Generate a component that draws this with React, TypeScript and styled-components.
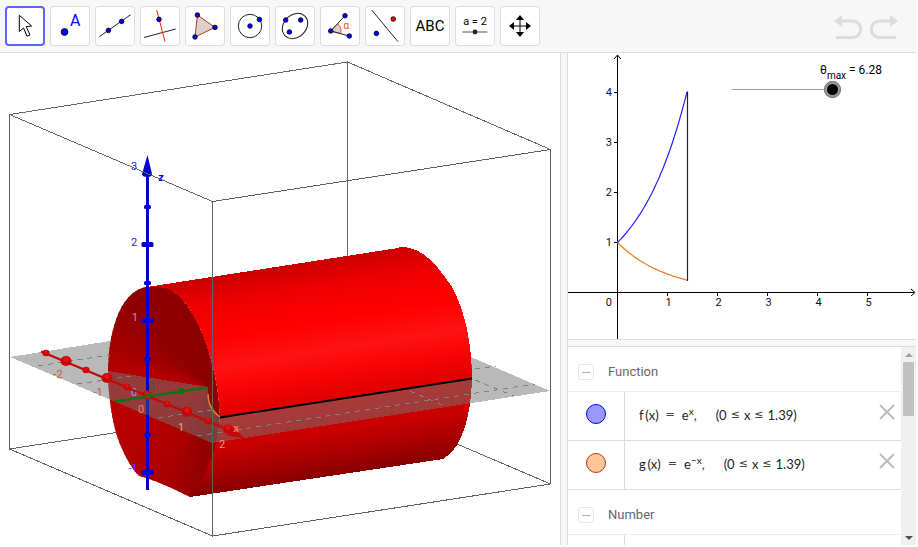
import React, { useState } from "react";
import styled, { createGlobalStyle } from "styled-components";

const GlobalStyle = createGlobalStyle`
  * { box-sizing: border-box; }
  body { margin: 0; background: #fff; font-family: Roboto, "Liberation Sans", sans-serif; }
  button { padding: 0; border: 0; background: none; font: inherit; cursor: pointer; }
  svg { display: block; }
`;

const Page = styled.div`
  display: flex;
  flex-direction: column;
  height: 100vh;
  padding: 0 2px 2px 0;
  overflow: hidden;
`;

const Toolbar = styled.header`
  display: flex;
  align-items: flex-start;
  justify-content: space-between;
  padding: 6px 18px 6px 5px;
  background: #f7f7f7;
  border-bottom: 1px solid #dcdcdc;
`;

const ToolGroup = styled.nav`
  display: flex;
  gap: 5px;
`;

const ToolButton = styled.button<{ $active?: boolean }>`
  width: 40px;
  height: 40px;
  border-radius: 4px;
  background: #fff;
  box-shadow: inset 0 0 0 ${(p) => (p.$active ? "2px #6161ff" : "1px #dcdcdc")};
`;

const HistoryGroup = styled.div`
  display: flex;
  gap: 8px;
  padding-top: 6px;
`;

const Workspace = styled.main`
  flex: 1;
  min-height: 0;
  display: flex;
`;

const SpacePane = styled.section`
  flex: 560 1 0;
  min-width: 0;
  overflow: hidden;
`;

const Divider = styled.div`
  flex: 0 0 8px;
  background: #f7f7f7;
  border: solid #dcdcdc;
  border-width: 0 1px;
`;

const SideColumn = styled.div`
  flex: 348 1 0;
  min-width: 0;
  display: flex;
  flex-direction: column;
`;

const GraphPane = styled.section`
  position: relative;
  flex: 286 1 0;
  min-height: 0;
  overflow: hidden;
`;

const HorizontalDivider = styled.div`
  flex: 0 0 8px;
  background: #f7f7f7;
  border: solid #dcdcdc;
  border-width: 1px 0;
`;

const Drawing = styled.svg`
  width: 100%;
  height: 100%;
`;

const SliderBox = styled.div`
  position: absolute;
  top: 7px;
  right: 34px;
  display: flex;
  flex-direction: column;
  align-items: flex-end;
  gap: 1px;
`;

const SliderLabel = styled.label`
  font-size: 12px;
  line-height: 20px;
  color: #000;
  sub {
    font-size: 10px;
    line-height: 0;
    vertical-align: -5px;
  }
`;

const Range = styled.input`
  appearance: none;
  width: 109px;
  height: 17px;
  margin: 0 41px 0 0;
  background: linear-gradient(#999, #999) 0 8px / 100px 1px no-repeat;
  &::-webkit-slider-thumb {
    appearance: none;
    width: 17px;
    height: 17px;
    border: 3px solid #999;
    border-radius: 50%;
    background: #000;
    outline: 1px solid #777;
    outline-offset: -1px;
  }
`;

const AlgebraPane = styled.section`
  flex: 198 1 0;
  min-height: 0;
  display: flex;
  overflow: hidden;
`;

const AlgebraList = styled.div`
  flex: 1;
  min-width: 0;
  overflow: hidden;
`;

const GroupHeader = styled.div`
  display: flex;
  align-items: center;
  gap: 14px;
  height: 45px;
  padding: 6px 0 0 10px;
  border-bottom: 1px solid #eee;
`;

const GroupTitle = styled.h2`
  margin: 0;
  font-size: 13px;
  line-height: 16px;
  font-weight: 400;
  color: #666;
`;

const CollapseButton = styled.button`
  display: grid;
  place-items: center;
  width: 16px;
  height: 16px;
  border: 1px solid #e6e6e6;
  border-radius: 3px;
  &::after {
    content: "";
    width: 8px;
    height: 1px;
    background: #aaa;
  }
`;

const AlgebraRow = styled.div`
  display: flex;
  height: 49px;
  border-bottom: 1px solid #dcdcdc;
`;

const MarbleCell = styled.div`
  display: grid;
  place-items: center;
  flex: 0 0 57px;
  padding-bottom: 4px;
  border-right: 1px solid #dcdcdc;
`;

const Marble = styled.button<{ $fill: string; $edge: string }>`
  width: 20px;
  height: 20px;
  border: 1px solid ${(p) => p.$edge};
  border-radius: 50%;
  background: ${(p) => p.$fill};
`;

const Formula = styled.div`
  display: flex;
  align-items: center;
  gap: 7px;
  flex: 1;
  padding: 0 0 2px 14px;
  font-family: Lato, sans-serif;
  font-size: 13px;
  line-height: 20px;
  color: #222;
  white-space: nowrap;
  sup {
    font-size: 10px;
    line-height: 0;
    vertical-align: 5px;
  }
`;

const Domain = styled.span`
  display: flex;
  gap: 4px;
  padding-left: 12px;
`;

const Relation = styled.span`
  font-family: "DejaVu Sans", sans-serif;
  font-size: 11px;
  color: #444;
`;

const DeleteButton = styled.button`
  align-self: center;
  margin: 0 6px 8px 0;
`;

const ScrollTrack = styled.div`
  display: flex;
  flex-direction: column;
  align-items: center;
  flex: 0 0 15px;
  background: #f0f0f0;
`;

const ScrollButton = styled.button`
  display: grid;
  place-items: center;
  width: 15px;
  height: 15px;
`;

const ScrollThumb = styled.div`
  width: 11px;
  height: 54px;
  background: #c1c1c1;
`;

const ScrollSpace = styled.div`
  flex: 1;
`;

const Dot = ({ x, y, r = 2.5, c = "#00f" }: { x: number; y: number; r?: number; c?: string }) => (
  <circle cx={x} cy={y} r={r - 0.2} fill={c} stroke="#000" strokeWidth="0.8" />
);

const tools: { name: string; icon: React.ReactNode }[] = [
  {
    name: "Move",
    icon: <path d="M14.3 9.3V25.5L18.6 22L22 30.2L25 29L21.3 20.7L26.6 20Z" fill="#fff" stroke="#000" strokeWidth="1" />,
  },
  {
    name: "Point",
    icon: (
      <>
        <Dot x={14.5} y={26} r={3.6} />
        <text x="20" y="20" fontSize="16" fill="#00f">A</text>
      </>
    ),
  },
  {
    name: "Line",
    icon: (
      <>
        <path d="M4.3 30.7L35.7 8.7" stroke="#222" />
        <Dot x={13.4} y={24.4} />
        <Dot x={26.6} y={15.4} />
      </>
    ),
  },
  {
    name: "Perpendicular line",
    icon: (
      <>
        <path d="M4 31.5L35.7 23" stroke="#222" />
        <path d="M16.7 4L25 35.7" stroke="#f42c00" />
        <Dot x={19} y={13.4} />
      </>
    ),
  },
  {
    name: "Polygon",
    icon: (
      <>
        <path d="M12.4 9L30 21.4L10 31Z" fill="#ddd0cc" stroke="#a63a1e" />
        <Dot x={12.4} y={9} />
        <Dot x={30} y={21.4} />
        <Dot x={10} y={31} />
      </>
    ),
  },
  {
    name: "Circle",
    icon: (
      <>
        <circle cx="20" cy="20" r="11.7" fill="none" stroke="#222" />
        <Dot x={20} y={20} />
        <Dot x={29.4} y={13.4} />
      </>
    ),
  },
  {
    name: "Ellipse",
    icon: (
      <>
        <ellipse cx="20" cy="20" rx="14" ry="11.2" transform="rotate(-45 20 20)" fill="none" stroke="#222" />
        <Dot x={10.7} y={14} />
        <Dot x={25.7} y={14} />
        <Dot x={14.4} y={26} />
      </>
    ),
  },
  {
    name: "Angle",
    icon: (
      <>
        <path d="M10.7 25L17.8 17.5A10.5 10.5 0 0 1 20.9 27.6Z" fill="#ddd0cc" stroke="#f0604a" />
        <path d="M25 9.7L10.7 25L29.3 30" fill="none" stroke="#222" />
        <text x="23.5" y="23" fontSize="10" fill="#f4422a">α</text>
        <Dot x={25} y={9.7} />
        <Dot x={10.7} y={25} />
        <Dot x={29.3} y={30} />
      </>
    ),
  },
  {
    name: "Reflect",
    icon: (
      <>
        <path d="M6.7 4L33 35.7" stroke="#222" />
        <Dot x={28.3} y={13} c="#f00" />
        <Dot x={11.4} y={27.4} />
      </>
    ),
  },
  {
    name: "Text",
    icon: <text x="20" y="25" fontSize="15" textAnchor="middle" fill="#000">ABC</text>,
  },
  {
    name: "Slider",
    icon: (
      <>
        <text x="20" y="19" fontSize="11" textAnchor="middle" fill="#000">a = 2</text>
        <path d="M7.5 26H32.5" stroke="#555" />
        <circle cx="20" cy="26" r="2.4" fill="#223" />
      </>
    ),
  },
  {
    name: "Move view",
    icon: (
      <>
        <path d="M11 20H29M20 11V29" stroke="#000" />
        <path d="M9 20L14 16V24ZM31 20L26 16V24ZM20 9L16 14H24ZM20 31L16 26H24Z" fill="#000" />
      </>
    ),
  },
];

/* ---- 3D scene ---- */

const apex = { x: 208, y: 387 };
const shadeStops: [number, number][] = [
  [0, 0x8c], [60, 0x8e], [96, 0x94], [104, 0xa0], [120, 0xae], [150, 0xb6],
  [175, 0xbc], [192, 0xb2], [212, 0x9a], [228, 0x8f], [270, 0x8c], [360, 0x8c],
];

function shade(angle: number) {
  const i = Math.max(1, shadeStops.findIndex(([a]) => a >= angle));
  const [a0, v0] = shadeStops[i - 1];
  const [a1, v1] = shadeStops[i];
  return Math.round(v0 + ((v1 - v0) * (angle - a0)) / (a1 - a0));
}

const fan = Array.from({ length: 120 }, (_, i) => {
  const at = (deg: number) => {
    const t = (deg * Math.PI) / 180;
    return `${(apex.x + 300 * Math.cos(t)).toFixed(1)} ${(apex.y + 300 * Math.sin(t)).toFixed(1)}`;
  };
  const start = i * 3;
  return { d: `M${apex.x} ${apex.y}L${at(start)}L${at(start + 4)}Z`, fill: `rgb(${shade(start)},0,0)` };
});

const facePath =
  "M147 287C136 288 126 297 119 312C112 328 108 349 108 371C108 392 111 414 116 433C121 449 130 467 139 476C155 480 172 488 190 497L200 494C212 470 218 440 220 417C219 385 211 355 203 335C194 312 178 287 160 287Z";
const sidePath =
  "M147 287L398 248Q402 246 409 248C424 250 438 266 452 287C465 310 472 345 472 379C471 414 463 448 443 459L190 497C209 474 218 445 220 417C219 385 211 355 203 335C194 312 178 287 160 287Z";

const redNodes: [number, number, number][] = [
  [46, 353, 3.6], [66, 361, 5.6], [86, 370, 3.6], [107, 378, 5.6], [127, 387, 3.6],
  [147, 395, 5], [167, 404, 3.6], [187, 412, 5.6], [208, 421, 3.6], [228, 429, 5],
];
const blueTicks: [number, number, number][] = [
  [207, 3.5, 4], [244.5, 6, 5], [283, 3.5, 4], [320.5, 6, 5], [359, 3.5, 4], [397, 5, 3], [435, 3.5, 4], [472.5, 6, 5],
];
const sceneLabels: [string, number, number, string][] = [
  ["3", 134, 170, "#2222f0"], ["2", 134, 246, "#2222f0"], ["1", 135, 321, "#9494ff"],
  ["0", 134, 396, "#9494ff"], ["-1", 133, 472, "#4444ff"], ["-2", 58, 378, "#c06040"],
  ["-1", 98, 396, "#c06040"], ["0", 141, 413, "#e08874"], ["1", 181, 431, "#eca08c"],
  ["2", 222, 448, "#f09c88"], ["0", 151, 390, "#157015"], ["z", 161, 181, "#0000f0"],
];

const Scene = () => (
  <Drawing viewBox="0 53 560 492" preserveAspectRatio="xMinYMin meet" role="img" aria-label="3D view of the solid of revolution">
    <defs>
      <linearGradient id="side" gradientUnits="userSpaceOnUse" x1="300" y1="264" x2="333" y2="475">
        <stop offset="0" stopColor="#cc0000" />
        <stop offset="0.12" stopColor="#ee0000" />
        <stop offset="0.28" stopColor="#ff0000" />
        <stop offset="0.42" stopColor="#ff1212" />
        <stop offset="0.52" stopColor="#fa0404" />
        <stop offset="0.64" stopColor="#e00000" />
        <stop offset="0.8" stopColor="#c80000" />
        <stop offset="0.92" stopColor="#a40000" />
        <stop offset="1" stopColor="#880000" />
      </linearGradient>
      <clipPath id="face">
        <path d={facePath} />
      </clipPath>
    </defs>
    <g fill="none" stroke="#666" strokeWidth="1" shapeRendering="crispEdges">
      <path d="M9.5 114.5L347.5 62L550.5 149.5M347.5 62V260M9.5 449L120 432M450 441L550.5 484" />
    </g>
    <g shapeRendering="crispEdges">
      <g clipPath="url(#face)">
        {fan.map((f) => (
          <path key={f.d} d={f.d} fill={f.fill} />
        ))}
      </g>
      <path d={sidePath} fill="url(#side)" />
      <path d="M10 357L110 341L108 371L208 387L209 402L220 417L472 379L471 357L550 391L212 443Z" fill="#747474" fillOpacity="0.5" />
    </g>
    <g fill="none" stroke="#808080" strokeDasharray="5 5" shapeRendering="crispEdges">
      <path d="M38 366L110 355M77 384L132 376M158 418L212 410M197 436L535 384M475 369L496 366M475 380L514 396M410 391L447 407" />
    </g>
    <path d="M220 417.5L472 378.5" stroke="#000" strokeWidth="1.8" />
    <path d="M208 394Q208 409 220 417" fill="none" stroke="#f08020" strokeWidth="1.3" />
    <g fontSize="11" textAnchor="middle">
      {sceneLabels.map(([text, x, y, fill], i) => (
        <text key={i} x={x} y={y} fill={fill} fontWeight={text === "z" ? 700 : 400}>{text}</text>
      ))}
    </g>
    <g fill="#0000d0">
      <path d="M146 172H149V397H146ZM146 415H149V490H146Z" />
      <path d="M146 397H149V415H146Z" fill="#28289c" />
      <path d="M147.5 155L152 174Q152 177 147.5 177Q142 177 142 174Z" />
      {blueTicks.map(([y, w, h]) => (
        <rect key={y} x={147.5 - w} y={y - h / 2} width={w * 2} height={h} rx="1.5" />
      ))}
    </g>
    <g fill="#c80808" stroke="#c40808">
      <path d="M41 351.5L236 433" strokeWidth="2.4" />
      <path d="M231 427L244 438L228 435Z" />
      {redNodes.map(([x, y, r]) => (
        <ellipse key={x} cx={x} cy={y} rx={r} ry={r * 0.9} stroke="none" />
      ))}
      {redNodes.map(([x, y, r]) => (
        <circle key={x} cx={x} cy={y - r * 0.3} r={r * 0.45} fill="#e01414" stroke="none" />
      ))}
    </g>
    <text x="236" y="432" fontSize="11" fontWeight="700" textAnchor="middle" fill="#ff6858">x</text>
    <path d="M115 401.5L207 387.5" stroke="#147014" strokeWidth="2.4" />
    <rect x="178" y="388" width="6" height="6" rx="1" fill="#147014" />
    <rect x="146" y="393" width="5" height="5" rx="1" fill="#147014" />
    <g fill="none" stroke="#606060" shapeRendering="crispEdges">
      <path d="M9.5 114.5V449L212.5 536L550.5 484V149.5L212.5 201.5L9.5 114.5M212.5 201.5V536" />
    </g>
  </Drawing>
);

/* ---- 2D graph ---- */

const unit = 50;
const origin = { x: 49.5, y: 239.5 };
const plot = (fn: (x: number) => number) =>
  Array.from({ length: 41 }, (_, i) => {
    const x = (1.39 * i) / 40;
    return `${i ? "L" : "M"}${(origin.x + x * unit).toFixed(1)} ${(origin.y - fn(x) * unit).toFixed(1)}`;
  }).join("");

const Graph = () => (
  <Drawing viewBox="0 0 348 286" preserveAspectRatio="xMinYMin meet" role="img" aria-label="Graph of f and g">
    <g fill="none" stroke="#000">
      <path d="M49.5 286V3M46 6L49.5 2L53 6M0 239.5H346M343 236L347 239.5L343 243" />
      {[1, 2, 3, 4, 5].map((n) => (
        <path key={n} d={`M${origin.x + n * unit} 240V243`} />
      ))}
      {[1, 2, 3, 4].map((n) => (
        <path key={n} d={`M46 ${origin.y - n * unit}H49`} />
      ))}
    </g>
    <path d={plot((x) => Math.exp(x))} fill="none" stroke="#2222ff" strokeWidth="1.2" />
    <path d={plot((x) => Math.exp(-x))} fill="none" stroke="#f47c20" strokeWidth="1.3" />
    <path d="M119.5 38.5V228" stroke="#222" strokeWidth="1.2" />
    <g fontSize="11" fill="#111">
      {[1, 2, 3, 4, 5].map((n) => (
        <text key={n} x={origin.x + n * unit + 1} y="253" textAnchor="middle">{n}</text>
      ))}
      {[1, 2, 3, 4].map((n) => (
        <text key={n} x="44" y={origin.y - n * unit + 3} textAnchor="end">{n}</text>
      ))}
      <text x="44" y="253" textAnchor="end">0</text>
    </g>
  </Drawing>
);

const FunctionRow = ({ name, exponent, fill, edge }: { name: string; exponent: string; fill: string; edge: string }) => (
  <AlgebraRow>
    <MarbleCell>
      <Marble $fill={fill} $edge={edge} aria-label={`Show or hide ${name}`} />
    </MarbleCell>
    <Formula>
      <span>{name}&#8201;(x)</span>
      <Relation>=</Relation>
      <span>e<sup>{exponent}</sup>,</span>
      <Domain>
        <span>(0</span>
        <Relation>≤</Relation>
        <span>x</span>
        <Relation>≤</Relation>
        <span>1.39)</span>
      </Domain>
    </Formula>
    <DeleteButton aria-label={`Delete ${name}`}>
      <svg width="16" height="16" viewBox="0 0 16 16">
        <path d="M1 1L15 15M15 1L1 15" stroke="#bbb" strokeWidth="1.9" />
      </svg>
    </DeleteButton>
  </AlgebraRow>
);

export default function App() {
  const [active, setActive] = useState("Move");
  const [theta, setTheta] = useState(6.28);
  return (
    <Page>
      <GlobalStyle />
      <Toolbar>
        <ToolGroup>
          {tools.map((t) => (
            <ToolButton key={t.name} aria-label={t.name} $active={t.name === active} onClick={() => setActive(t.name)}>
              <svg width="40" height="40" viewBox="0 0 40 40">{t.icon}</svg>
            </ToolButton>
          ))}
        </ToolGroup>
        <HistoryGroup>
          <button aria-label="Undo">
            <svg width="28" height="30" viewBox="0 0 28 30">
              <path d="M7 9H18.5A8.2 8.2 0 0 1 18.5 25.5H2" fill="none" stroke="#dcdcdc" strokeWidth="3" />
              <path d="M0 9L8 3V15Z" fill="#dcdcdc" />
            </svg>
          </button>
          <button aria-label="Redo">
            <svg width="28" height="30" viewBox="0 0 28 30">
              <path d="M21 9H9.5A8.2 8.2 0 0 0 9.5 25.5H26" fill="none" stroke="#dcdcdc" strokeWidth="3" />
              <path d="M28 9L20 3V15Z" fill="#dcdcdc" />
            </svg>
          </button>
        </HistoryGroup>
      </Toolbar>
      <Workspace>
        <SpacePane>
          <Scene />
        </SpacePane>
        <Divider />
        <SideColumn>
          <GraphPane>
            <Graph />
            <SliderBox>
              <SliderLabel htmlFor="theta">
                θ<sub>max</sub> = {theta.toFixed(2)}
              </SliderLabel>
              <Range
                id="theta"
                type="range"
                min={0}
                max={6.28}
                step={0.01}
                value={theta}
                onChange={(e) => setTheta(Number(e.target.value))}
              />
            </SliderBox>
          </GraphPane>
          <HorizontalDivider />
          <AlgebraPane>
            <AlgebraList>
              <GroupHeader>
                <CollapseButton aria-label="Collapse Function" />
                <GroupTitle>Function</GroupTitle>
              </GroupHeader>
              <FunctionRow name="f" exponent="x" fill="#9999ff" edge="#0000f0" />
              <FunctionRow name="g" exponent="−x" fill="#ffc799" edge="#b83a1c" />
              <GroupHeader>
                <CollapseButton aria-label="Collapse Number" />
                <GroupTitle>Number</GroupTitle>
              </GroupHeader>
              <AlgebraRow>
                <MarbleCell />
              </AlgebraRow>
            </AlgebraList>
            <ScrollTrack>
              <ScrollButton aria-label="Scroll up">
                <svg width="8" height="4" viewBox="0 0 8 4"><path d="M4 0L8 4H0Z" fill="#a0a0a0" /></svg>
              </ScrollButton>
              <ScrollThumb />
              <ScrollSpace />
              <ScrollButton aria-label="Scroll down">
                <svg width="8" height="4" viewBox="0 0 8 4"><path d="M0 0H8L4 4Z" fill="#505050" /></svg>
              </ScrollButton>
            </ScrollTrack>
          </AlgebraPane>
        </SideColumn>
      </Workspace>
    </Page>
  );
}
